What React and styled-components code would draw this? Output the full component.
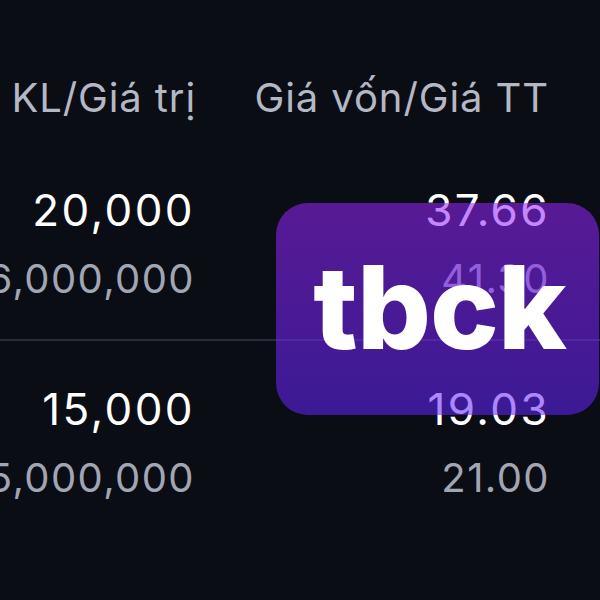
import React from "react";
import styled, { createGlobalStyle } from "styled-components";

const rows = [
  { qty: "20,000", value: "16,000,000", cost: "37.66", market: "41.30" },
  { qty: "15,000", value: "15,000,000", cost: "19.03", market: "21.00" },
];

function App() {
  return (
    <Screen>
      <GlobalStyle />
      <Table>
        <HeadRow>
          <HeadCell>KL/Giá trị</HeadCell>
          <HeadCell>Giá vốn/Giá TT</HeadCell>
        </HeadRow>
        {rows.map((r, i) => (
          <React.Fragment key={r.qty}>
            {i > 0 && <Divider />}
            <Row>
              <Cell>
                <Main>{r.qty}</Main>
                <Sub>{r.value}</Sub>
              </Cell>
              <Cell>
                <Main>{r.cost}</Main>
                <Sub>{r.market}</Sub>
              </Cell>
            </Row>
          </React.Fragment>
        ))}
      </Table>
      <Badge>
        <BadgeText>tbck</BadgeText>
      </Badge>
    </Screen>
  );
}

const GlobalStyle = createGlobalStyle`
  body {
    margin: 0;
    background: #0b0d14;
  }
`;

const Screen = styled.div`
  position: relative;
  width: 600px;
  height: 600px;
  overflow: hidden;
  background: #0b0d14;
  font-family: Inter, Roboto, "Noto Sans", sans-serif;
`;

const Table = styled.div`
  display: flex;
  flex-direction: column;
  padding-top: 74px;
`;

const HeadRow = styled.div`
  display: grid;
  grid-template-columns: 196px 353px;
  margin-bottom: 20px;
`;

const HeadCell = styled.div`
  display: flex;
  justify-content: flex-end;
  white-space: nowrap;
  font-size: 40px;
  line-height: 48px;
  letter-spacing: 0.9px;
  color: #b4b8c4;
`;

const Row = styled.div`
  display: grid;
  grid-template-columns: 195px 355px;
  padding: 42px 0 36px;
`;

const Cell = styled.div`
  display: flex;
  flex-direction: column;
  align-items: flex-end;
  gap: 19px;
  white-space: nowrap;
`;

const Main = styled.div`
  font-size: 44px;
  line-height: 52px;
  letter-spacing: 2.4px;
  color: #ffffff;
`;

const Sub = styled.div`
  font-size: 40px;
  line-height: 48px;
  letter-spacing: 1.4px;
  color: #a2a6b2;
`;

const Divider = styled.div`
  height: 2px;
  width: 600px;
  background: #282c3a;
`;

const Badge = styled.div`
  position: absolute;
  left: 276px;
  top: 203px;
  width: 323px;
  height: 212px;
  border-radius: 32px;
  display: flex;
  align-items: center;
  justify-content: center;
  background: linear-gradient(
    180deg,
    rgba(151, 36, 255, 0.55) 0%,
    rgba(100, 36, 255, 0.55) 100%
  );
`;

const BadgeText = styled.span`
  font-family: Inter, "Liberation Sans", sans-serif;
  font-weight: 800;
  font-size: 116px;
  line-height: 1;
  letter-spacing: -1px;
  color: #ffffff;
  margin: -4px 0 0 4px;
`;

export default App;
